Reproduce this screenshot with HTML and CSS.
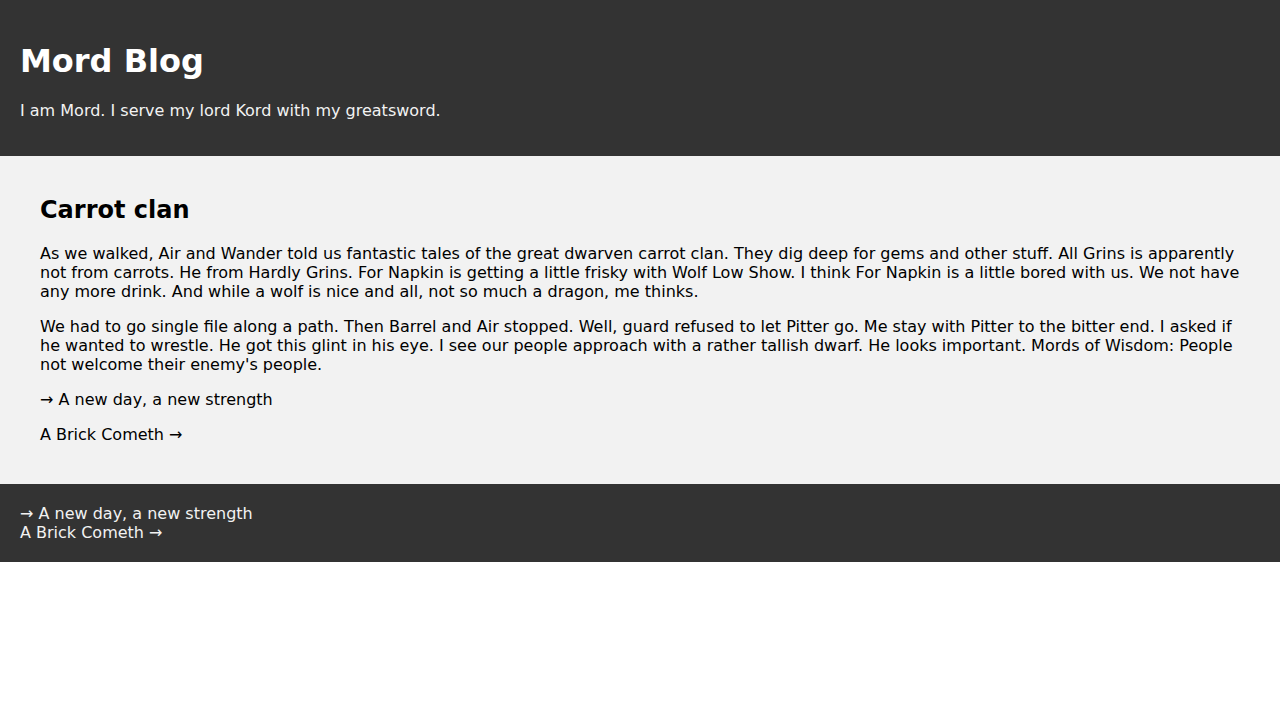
FILE: index.html
```html
<!DOCTYPE html>
<html lang="en">
<head>
<meta charset="utf-8">
<title>Mord Blog</title>
<link rel="stylesheet" href="styles.css">
</head>
<body>
<header class="site-header">
  <h1 class="site-title">Mord Blog</h1>
  <p class="site-tagline">I am Mord. I serve my lord Kord with my greatsword.</p>
</header>
<main class="content">
  <article class="post">
    <h2 class="post-title">Carrot clan</h2>
    <p>As we walked, Air and Wander told us fantastic tales of the great dwarven carrot clan. They dig deep for gems and other stuff. All Grins is apparently not from carrots. He from Hardly Grins. For Napkin is getting a little frisky with Wolf Low Show. I think For Napkin is a little bored with us. We not have any more drink. And while a wolf is nice and all, not so much a dragon, me thinks.</p>
    <p>We had to go single file along a path. Then Barrel and Air stopped. Well, guard refused to let Pitter go. Me stay with Pitter to the bitter end. I asked if he wanted to wrestle. He got this glint in his eye. I see our people approach with a rather tallish dwarf. He looks important. Mords of Wisdom: People not welcome their enemy's people.</p>
    <p><a class="post-link" href="#">→ A new day, a new strength</a></p>
    <p><a class="post-link" href="#">A Brick Cometh →</a></p>
  </article>
</main>
<footer class="site-footer">
  <a class="footer-link" href="#">→ A new day, a new strength</a>
  <a class="footer-link" href="#">A Brick Cometh →</a>
</footer>
</body>
</html>
```
FILE: styles.css
```css
html, body {
  margin: 0;
  padding: 0;
  background: #fff;
}
body {
  font-family: "DejaVu Sans", sans-serif;
  font-size: 16px;
  color: #000;
}
.site-header {
  background: #333;
  color: #f2f2f2;
  padding: 20px;
  display: flow-root;
}
.site-title {
  font-size: 32px;
  margin: 22px 0 21px;
  color: #fff;
}
.site-tagline {
  margin: 16px 0;
}
.content {
  background: #f2f2f2;
  padding: 20px 40px 24px;
  display: flow-root;
}
.post-title {
  font-size: 24px;
  margin: 19.92px 0;
}
.post p {
  margin: 16px 0;
}
.post-link {
  color: #000;
  text-decoration: none;
}
.site-footer {
  background: #333;
  padding: 20px;
  display: flex;
  flex-direction: column;
}
.footer-link {
  color: #f2f2f2;
  text-decoration: none;
}
```
